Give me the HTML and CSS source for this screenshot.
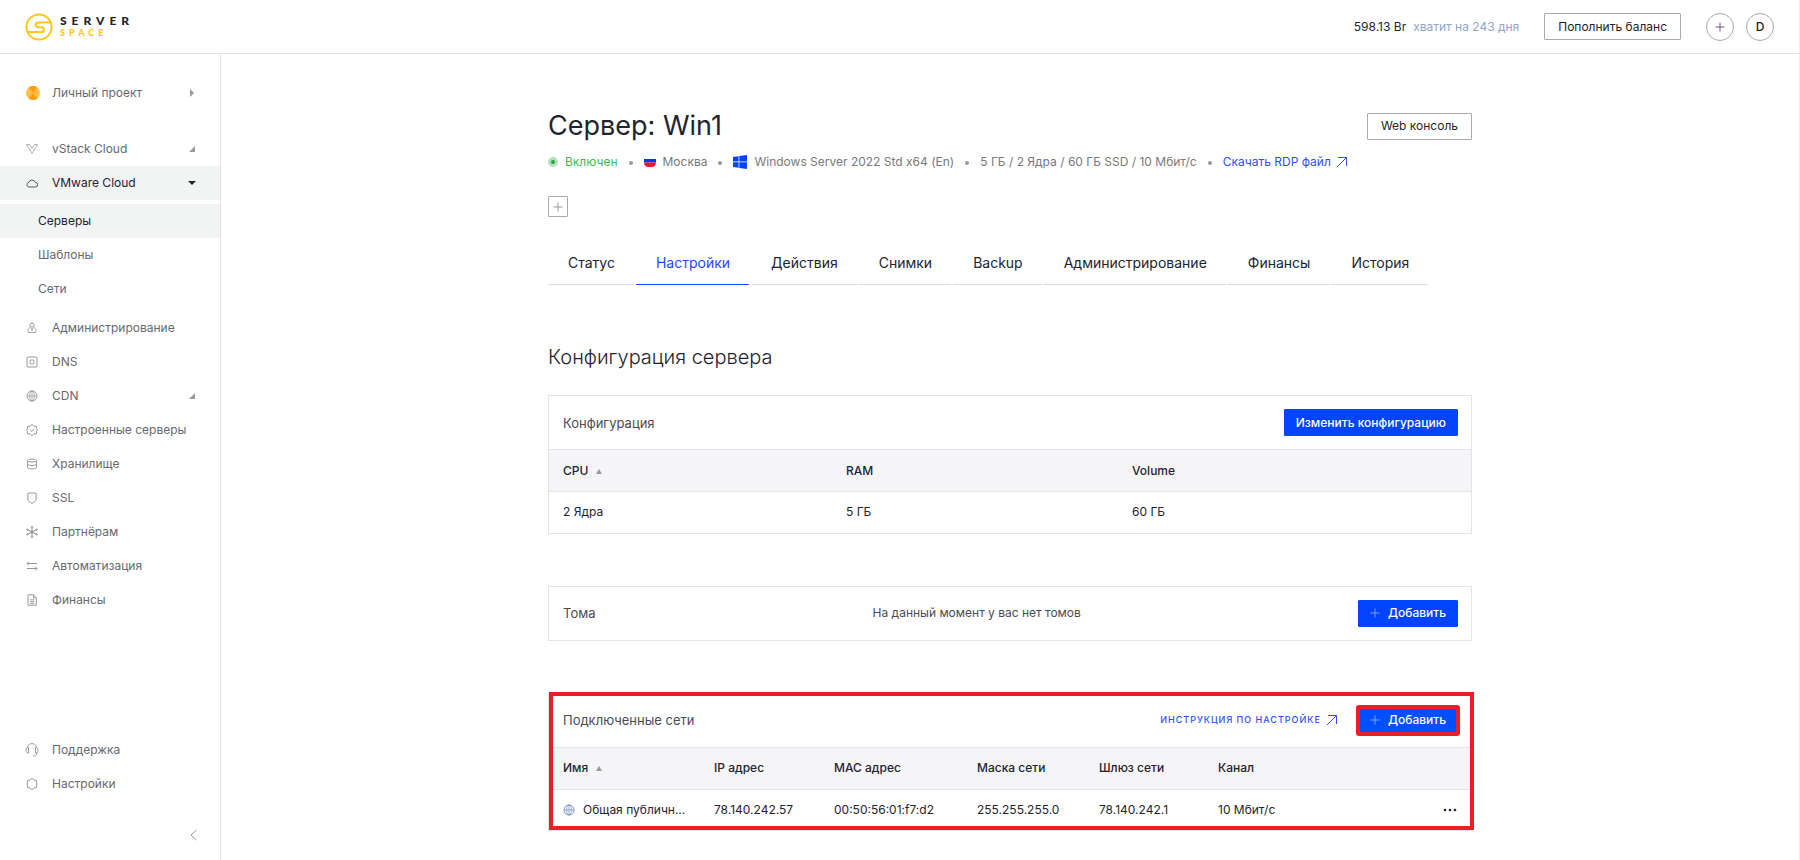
FILE: index.html
```html
<!DOCTYPE html>
<html lang="ru">
<head>
<meta charset="utf-8">
<title>Сервер: Win1</title>
<link rel="stylesheet" href="styles.css">
</head>
<body>
<svg class="defs" width="0" height="0" aria-hidden="true">
  <symbol id="globe" viewBox="0 0 12 12"><circle cx="6" cy="6" r="5"/><ellipse cx="6" cy="6" rx="2.3" ry="5" stroke-width=".8"/><path d="M1 6h10M6 1v10" stroke-width=".8"/></symbol>
  <symbol id="arrow" viewBox="0 0 12 12"><path d="M2 1.5h8.5V10M10.5 1.5 1 11"/></symbol>
  <symbol id="plus" viewBox="0 0 10 10"><path d="M5 .5v9M.5 5h9"/></symbol>
</svg>
<header class="header">
  <a class="logo" href="#" aria-label="Serverspace">
    <svg class="logo-mark" viewBox="0 0 28 28"><circle cx="14" cy="14" r="12.6"/><path d="M25.500 9.500H13.200a2.400 2.400 0 0 0 0 4.800h3.300a2.400 2.400 0 0 1 0 4.800H2.800"/></svg>
    <span class="logo-text"><span class="logo-top">SERVER</span><span class="logo-sub">SPACE</span></span>
  </a>
  <p class="balance"><span>598.13 Br</span><span class="balance-note">хватит на 243 дня</span></p>
  <button class="btn" type="button">Пополнить баланс</button>
  <div class="header-actions">
    <button class="round" type="button" aria-label="Создать"><svg class="ico round-plus"><use href="#plus"/></svg></button>
    <button class="round" type="button">D</button>
  </div>
</header>
<div class="layout">
  <aside class="sidebar">
    <nav class="menu">
      <a class="item project" href="#"><svg class="coin" viewBox="0 0 14 14"><circle cx="7" cy="7" r="7" fill="#ffbf4a"/><path d="M2.500 1.600a7 7 0 0 1 9 0L7 7l4.500 5.400a7 7 0 0 1-9 0L7 7z" fill="#ff9f0f"/></svg>Личный проект<svg class="caret" viewBox="0 0 8 8"><path d="M2 0v8l4-4z"/></svg></a>
      <a class="item" href="#"><svg class="ico" viewBox="0 0 12 12"><path d="M.5 1.500h3L6 5.500l2.500-4h3L6 10.500z" stroke-width=".8"/></svg>vStack Cloud<svg class="caret" viewBox="0 0 8 8"><path d="M7 1v6H1z"/></svg></a>
      <a class="item active" href="#"><svg class="ico" viewBox="0 0 12 12"><path d="M2.600 10a2.200 2.200 0 0 1 0-4.300 3.500 3.500 0 0 1 6.700-.3A2.300 2.300 0 0 1 9.500 10z"/></svg>VMware Cloud<svg class="caret" viewBox="0 0 8 8"><path d="M0 2h8L4 6z"/></svg></a>
      <div class="submenu">
        <a class="item sub active" href="#">Серверы</a>
        <a class="item sub" href="#">Шаблоны</a>
        <a class="item sub" href="#">Сети</a>
      </div>
      <a class="item" href="#"><svg class="ico" viewBox="0 0 12 12"><circle cx="6" cy="3" r="2"/><path d="M4.500 4.800C2.500 6 2 7 2 10.500h8C10 7 9.500 6 7.500 4.800M6 6.500V9M4.300 5.500 6 8l1.700-2.500" stroke-width=".8"/></svg>Администрирование</a>
      <a class="item" href="#"><svg class="ico" viewBox="0 0 12 12"><rect x="1" y="1" width="10" height="10" rx="1"/><rect x="4" y="4" width="4" height="4" rx="1"/></svg>DNS</a>
      <a class="item" href="#"><svg class="ico"><use href="#globe"/></svg>CDN<svg class="caret" viewBox="0 0 8 8"><path d="M7 1v6H1z"/></svg></a>
      <a class="item" href="#"><svg class="ico" viewBox="0 0 12 12"><path d="M6 .5 7.700 1.900l3 .6-.3 1.800.9 1.700-.9 1.700.3 1.800-3 .6L6 11.500l-1.700-1.400-3-.6.3-1.800L.7 6l.9-1.700-.3-1.800 3-.6zM4 6l1.500 1.500L8 4.800"/></svg>Настроенные серверы</a>
      <a class="item" href="#"><svg class="ico" viewBox="0 0 12 12"><ellipse cx="6" cy="2.500" rx="4.500" ry="1.500"/><path d="M1.500 2.500v7c0 2 9 2 9 0v-7M1.500 6c0 2 9 2 9 0"/></svg>Хранилище</a>
      <a class="item" href="#"><svg class="ico" viewBox="0 0 12 12"><path d="M1.800 1.500C5 .8 7 .8 10.200 1.500V7C10 9 8 10.500 6 11.300 4 10.500 2 9 1.800 7z"/></svg>SSL</a>
      <a class="item" href="#"><svg class="ico" viewBox="0 0 12 12"><circle cx="6" cy="6" r="1.300"/><circle cx="6" cy="1.200" r=".8"/><circle cx="6" cy="10.800" r=".8"/><circle cx="1.400" cy="3.600" r=".8"/><circle cx="10.600" cy="3.600" r=".8"/><circle cx="1.400" cy="8.400" r=".8"/><circle cx="10.600" cy="8.400" r=".8"/><path d="M6 2v8M2 4l8 4M10 4 2 8"/></svg>Партнёрам</a>
      <a class="item" href="#"><svg class="ico" viewBox="0 0 12 12"><path d="M11 3.500H1l2-2M1 3.500l2 2M1 8.500h10l-2-2M11 8.500l-2 2"/></svg>Автоматизация</a>
      <a class="item" href="#"><svg class="ico" viewBox="0 0 12 12"><path d="M2 .8h5.500L10.300 4v7.300H2zM7.500.8V4h2.800M4 5.800h4.300M4 7.600h4.300M4 9.400h4.300"/></svg>Финансы</a>
    </nav>
    <nav class="menu menu-bottom">
      <a class="item" href="#"><svg class="ico ico-wide" viewBox="0 0 14 14"><path d="M2.500 4.500C3-.7 11-.7 11.500 4.500M3.500 4.500C0 4 0 10.500 3.500 10zM10.500 4.500c3.500-.5 3.500 6 0 5.500zM12 9.500c0 2.500-1.500 3.500-4 3.500"/></svg>Поддержка</a>
      <a class="item" href="#"><svg class="ico" viewBox="0 0 12 12"><path d="M6 .5 7.700 1.900l3 .6-.3 1.800.9 1.700-.9 1.700.3 1.800-3 .6L6 11.500l-1.700-1.400-3-.6.3-1.800L.7 6l.9-1.700-.3-1.800 3-.6z"/></svg>Настройки</a>
    </nav>
    <button class="collapse" type="button" aria-label="Свернуть меню"><svg class="ico" viewBox="0 0 12 12"><path d="M8.500 1 3 6l5.500 5"/></svg></button>
  </aside>
  <main class="main">
    <div class="content">
      <div class="title-row">
        <h1 class="title">Сервер: Win1</h1>
        <button class="btn" type="button">Web консоль</button>
      </div>
      <ul class="info">
        <li class="on"><i class="status"></i>Включен</li>
        <li><svg class="flag" viewBox="0 0 12 12"><path d="M0 3h12v3.500H0z" fill="#0039e6"/><path d="M0 6.500h12C11.800 9.500 10 11 7.500 11h-3C2 11 .2 9.500 0 6.500z" fill="#f5122d"/></svg>Москва</li>
        <li><svg class="win" viewBox="0 0 14 14"><path d="M0 2 5.600 1.200V6.600H0zM6.300 1.100 14 0v6.600H6.300zM0 7.300h5.600v5.500L0 12zM6.300 7.300H14V14L6.300 12.900z"/></svg>Windows Server 2022 Std x64 (En)</li>
        <li>5 ГБ / 2 Ядра / 60 ГБ SSD / 10 Мбит/с</li>
        <li><a class="link" href="#">Скачать RDP файл<svg class="ico"><use href="#arrow"/></svg></a></li>
      </ul>
      <button class="tag-add" type="button" aria-label="Добавить метку"><svg class="ico"><use href="#plus"/></svg></button>
      <nav class="tabs">
        <a class="tab" href="#">Статус</a>
        <a class="tab current" href="#">Настройки</a>
        <a class="tab" href="#">Действия</a>
        <a class="tab" href="#">Снимки</a>
        <a class="tab" href="#">Backup</a>
        <a class="tab" href="#">Администрирование</a>
        <a class="tab" href="#">Финансы</a>
        <a class="tab" href="#">История</a>
      </nav>
      <h2 class="subtitle">Конфигурация сервера</h2>

      <section class="card">
        <div class="card-head">
          <h3 class="card-title">Конфигурация</h3>
          <button class="btn primary" type="button">Изменить конфигурацию</button>
        </div>
        <table class="table">
          <colgroup><col class="c-cpu"><col class="c-ram"><col></colgroup>
          <thead><tr><th>CPU<svg class="sort" viewBox="0 0 6 6"><path d="M3 0 6 5H0z"/></svg></th><th>RAM</th><th>Volume</th></tr></thead>
          <tbody><tr><td>2 Ядра</td><td>5 ГБ</td><td>60 ГБ</td></tr></tbody>
        </table>
      </section>

      <section class="card">
        <div class="card-head">
          <h3 class="card-title">Тома</h3>
          <p class="empty">На данный момент у вас нет томов</p>
          <button class="btn primary add" type="button"><svg class="ico"><use href="#plus"/></svg>Добавить</button>
        </div>
      </section>

      <section class="card marked">
        <div class="card-head">
          <h3 class="card-title">Подключенные сети</h3>
          <a class="link guide" href="#">Инструкция по настройке<svg class="ico"><use href="#arrow"/></svg></a>
          <button class="btn primary add marked-btn" type="button"><svg class="ico"><use href="#plus"/></svg>Добавить</button>
        </div>
        <table class="table">
          <colgroup><col class="c-name"><col class="c-ip"><col class="c-mac"><col class="c-mask"><col class="c-gate"><col><col class="c-more"></colgroup>
          <thead><tr><th>Имя<svg class="sort" viewBox="0 0 6 6"><path d="M3 0 6 5H0z"/></svg></th><th>IP адрес</th><th>MAC адрес</th><th>Маска сети</th><th>Шлюз сети</th><th>Канал</th><th></th></tr></thead>
          <tbody><tr><td><span class="net"><svg class="ico"><use href="#globe"/></svg>Общая публичн...</span></td><td>78.140.242.57</td><td>00:50:56:01:f7:d2</td><td>255.255.255.0</td><td>78.140.242.1</td><td>10 Мбит/с</td><td><button class="more" type="button" aria-label="Действия"><svg viewBox="0 0 14 4"><circle cx="2" cy="2" r="1.300"/><circle cx="7" cy="2" r="1.300"/><circle cx="12" cy="2" r="1.300"/></svg></button></td></tr></tbody>
        </table>
      </section>
    </div>
  </main>
</div>
</body>
</html>
```

FILE: styles.css
```css
* { box-sizing: border-box; }
body {
  margin: 0;
  min-height: 100vh;
  display: flex;
  flex-direction: column;
  font: 12px/16px Inter, "Liberation Sans", sans-serif;
  color: #23232f;
  background: #fff;
  border-right: 1px solid #ececec;
}
h1, h2, h3, p, ul { margin: 0; padding: 0; font-weight: 400; }
a { color: inherit; text-decoration: none; }
button { font: inherit; color: inherit; background: none; border: 0; padding: 0; cursor: pointer; }
.defs { position: absolute; }
.ico { width: 12px; height: 12px; flex: none; fill: none; stroke: currentColor; stroke-width: 1; }

.header {
  display: flex;
  align-items: center;
  height: 54px;
  padding: 0 25px;
  border-bottom: 1px solid #e2e2e2;
}
.logo { display: flex; align-items: center; gap: 7px; margin-right: auto; }
.logo-mark { width: 28px; height: 28px; fill: none; stroke: #ffc61a; stroke-width: 2; }
.logo-text { display: flex; flex-direction: column; gap: 1px; font-family: Lato, sans-serif; font-weight: 900; }
.logo-top { font-size: 12px; line-height: 12px; letter-spacing: 5px; color: #23232f; }
.logo-sub { font-size: 9px; line-height: 10px; letter-spacing: 4px; color: #ffc61a; }
.balance { display: flex; gap: 7px; margin-right: 25px; }
.balance-note { color: #91a5c9; }
.header-actions { display: flex; gap: 12px; margin-left: 25px; }
.btn {
  height: 27px;
  padding: 0 13px;
  border: 1px solid #a9a9ad;
  border-radius: 1px;
  white-space: nowrap;
}
.primary { padding: 0 11px; background: #04f; border-color: #04f; color: #fff; font-weight: 500; }
.add { display: flex; align-items: center; gap: 8px; }
.add .ico { width: 10px; height: 10px; color: #7fa0ff; }
.round {
  display: flex;
  align-items: center;
  justify-content: center;
  width: 28px;
  height: 28px;
  border: 1px solid #a9a9ad;
  border-radius: 50%;
  font-weight: 500;
}
.round-plus { width: 10px; height: 10px; color: #80528c; }

.layout { display: flex; flex: 1; }
.sidebar {
  display: flex;
  flex-direction: column;
  flex: none;
  width: 221px;
  padding: 22px 0 20px;
  border-right: 1px solid #e2e2e2;
  color: #66696f;
}
.item {
  display: flex;
  align-items: center;
  gap: 14px;
  height: 34px;
  padding: 0 24px 0 26px;
}
.item > .ico:first-child { color: #999; }
.item.active { background: #f2f4f4; color: #23232f; }
.item.active > .ico:first-child { color: #55555f; }
.project { margin-bottom: 22px; gap: 12px; }
.ico-wide, .coin { width: 14px; height: 14px; margin: 0 -1px; }
.coin { margin: 0; }
.caret { width: 8px; height: 8px; margin-left: auto; fill: #999; }
.active .caret { fill: #23232f; }
.submenu { padding: 4px 0 5px; }
.sub { padding-left: 38px; }
.menu-bottom { margin-top: auto; }
.collapse { align-self: flex-end; margin: 28px 20px 0 0; height: 12px; line-height: 0; color: #999; }

.main { flex: 1; padding: 56px 24px 30px; }
.content { max-width: 924px; margin: 0 auto; }
.title-row { display: flex; align-items: center; justify-content: space-between; }
.title { font-size: 27px; line-height: 32px; }
.info { display: flex; align-items: center; margin-top: 12px; list-style: none; color: #77797e; white-space: nowrap; }
.info li { display: flex; align-items: center; gap: 7px; }
.info li + li::before { content: ""; width: 4px; height: 4px; margin: 2px 4px 0 11px; border-radius: 50%; background: #999; }
.info .on { color: #3cba54; }
.status { width: 10px; height: 10px; border: 3px solid #b5dfbf; border-radius: 50%; background: #1faa3d; }
.flag { width: 12px; height: 12px; }
.win { width: 14px; height: 14px; fill: #04f; }
.link { display: flex; align-items: center; gap: 5px; color: #2b50f5; }
.tag-add {
  display: flex;
  align-items: center;
  justify-content: center;
  width: 20px;
  height: 21px;
  margin-top: 26px;
  border: 1px solid #a9a9ad;
  border-radius: 1px;
  color: #999;
}
.tag-add .ico { width: 10px; height: 10px; }
.tabs { display: flex; gap: 2px; margin-top: 26px; font-size: 14px; }
.tab { padding: 12px 19px 13px 20px; border-bottom: 1px solid #dcdcdc; }
.tab.current { color: #1f48ff; border-color: #1f48ff; }
.subtitle { margin-top: 60px; font-size: 20px; line-height: 24px; font-weight: 300; }

.card { margin-top: 52px; border: 1px solid #e4e4e6; }
.subtitle + .card { margin-top: 26px; }
.card-head { display: flex; align-items: center; min-height: 53px; padding: 0 13px 0 14px; }
.card-title { margin-right: auto; font-size: 13px; color: #4b4b55; }
.empty { margin-right: auto; color: #4b4b55; }
.table { width: 100%; table-layout: fixed; border-collapse: collapse; text-align: left; }
.table th, .table td { height: 42px; padding: 0 14px; white-space: nowrap; }
.table td { height: 41px; }
.table th { background: #f5f5f8; border: solid #e4e4ea; border-width: 1px 0; font-weight: 500; }
.sort { width: 6px; height: 6px; margin-left: 8px; fill: #999; }
.c-cpu { width: 283px; }
.c-ram { width: 286px; }
.c-name { width: 151px; }
.c-ip { width: 120px; }
.c-mac { width: 143px; }
.c-mask { width: 122px; }
.c-gate { width: 119px; }
.c-more { width: 42px; }
.net { display: flex; align-items: center; gap: 8px; }
.net .ico { color: #7f93c4; }
.more { display: block; line-height: 0; }
.more svg { width: 14px; height: 4px; fill: #23232f; }
.guide { margin-right: 20px; font-size: 9px; font-weight: 500; letter-spacing: 1px; text-transform: uppercase; }
.marked { position: relative; }
.marked::after {
  content: "";
  position: absolute;
  inset: -2px -3px 0 0;
  border: 4px solid #ee1c25;
  pointer-events: none;
}
.marked-btn { background: #0050ff; border-color: #0050ff; outline: 4px solid #ee1c25; outline-offset: -2px; }
```
